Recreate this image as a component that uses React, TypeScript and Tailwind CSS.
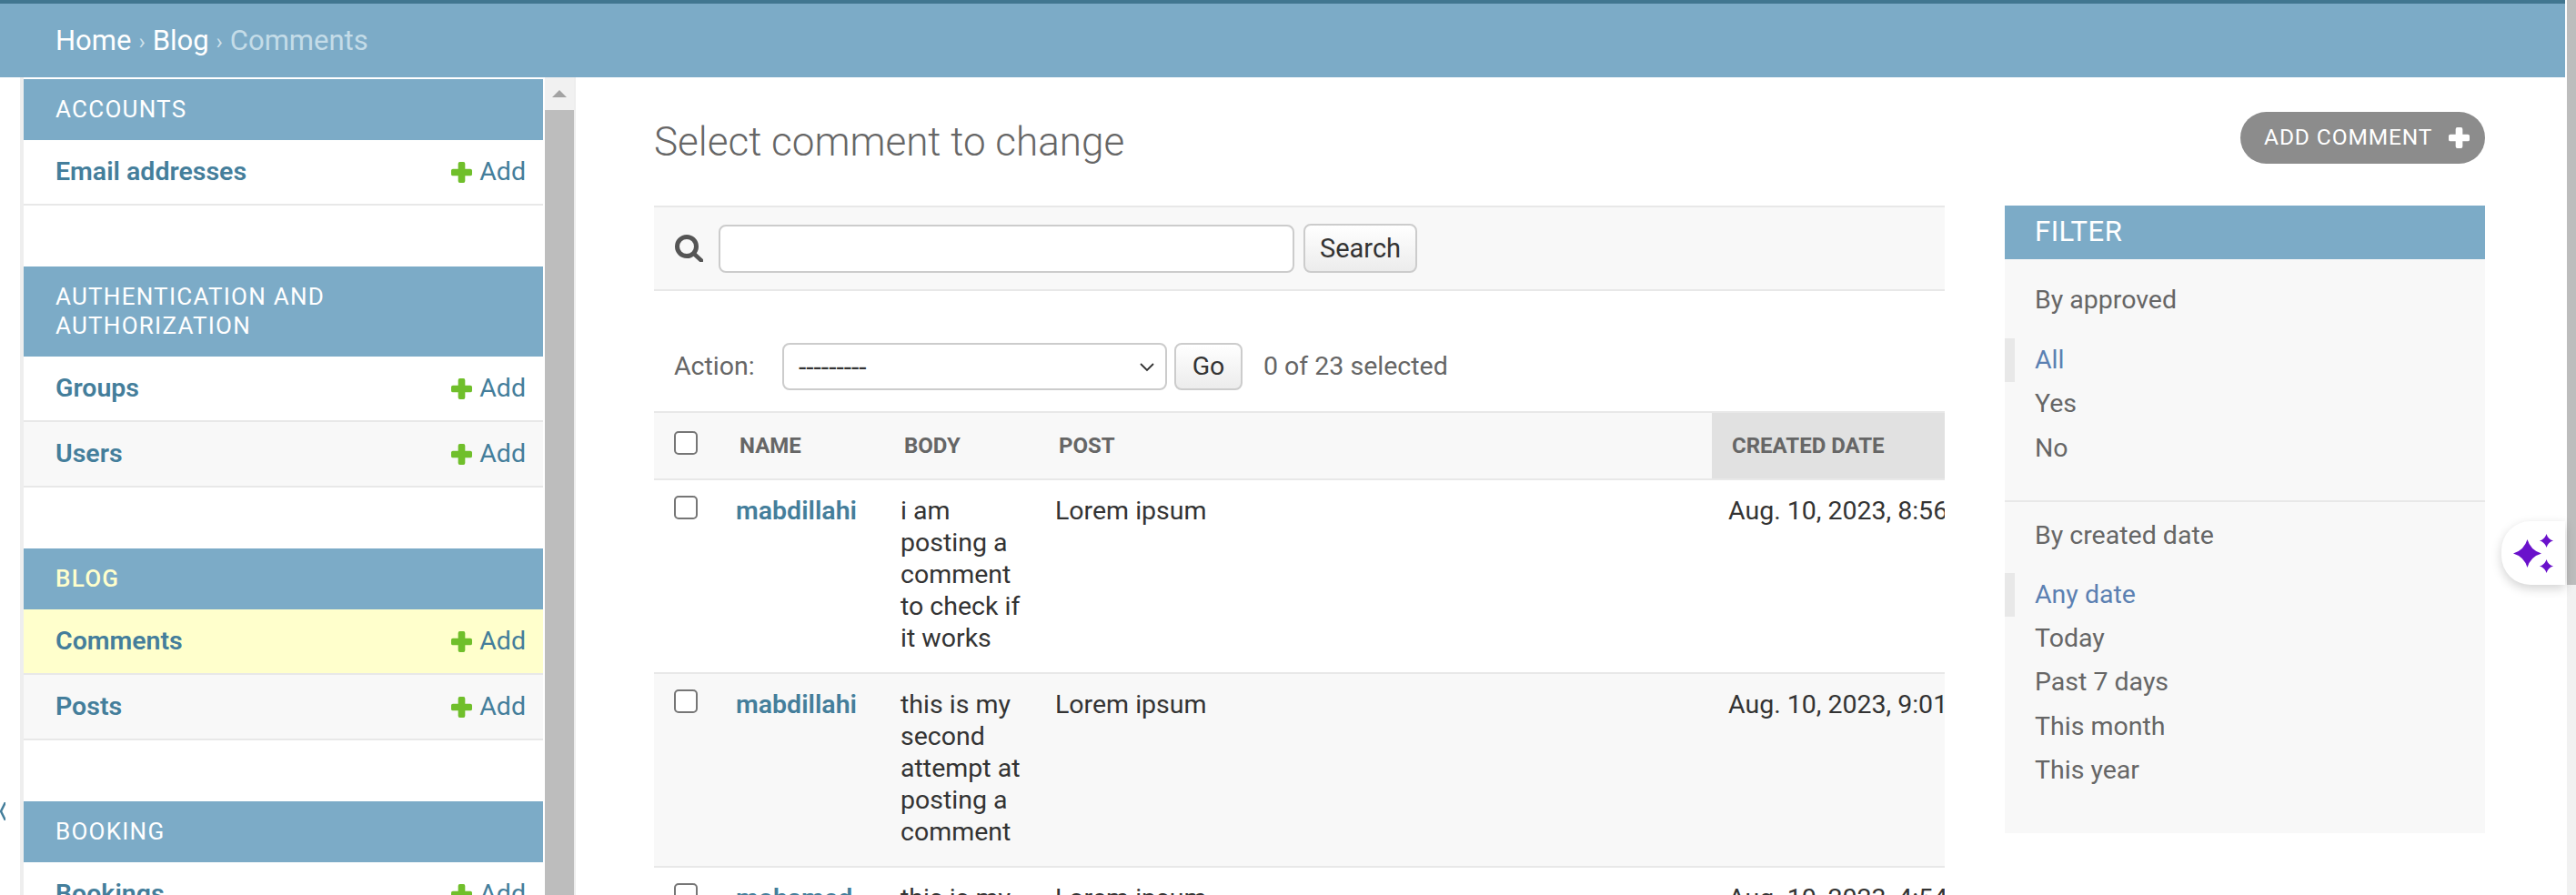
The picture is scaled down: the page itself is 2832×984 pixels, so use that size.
import { ReactNode } from "react";

const font = { fontFamily: "Roboto, 'Liberation Sans', sans-serif" };

const sections = [
  { title: "Accounts", rows: ["Email addresses"] },
  { title: "Authentication and Authorization", rows: ["Groups", "Users"] },
  { title: "Blog", rows: ["Comments", "Posts"], current: true },
  { title: "Booking", rows: ["Bookings"] },
];

const comments = [
  { name: "mabdillahi", body: "i am posting a comment to check if it works", post: "Lorem ipsum", date: "Aug. 10, 2023, 8:56 a.m." },
  { name: "mabdillahi", body: "this is my second attempt at posting a comment", post: "Lorem ipsum", date: "Aug. 10, 2023, 9:01 a.m." },
  { name: "mohamed", body: "this is my third comment", post: "Lorem ipsum", date: "Aug. 10, 2023, 4:54 p.m." },
];

const filters = [
  { title: "By approved", items: ["All", "Yes", "No"] },
  { title: "By created date", items: ["Any date", "Today", "Past 7 days", "This month", "This year"] },
];

function Plus({ className }: { className: string }) {
  return (
    <svg viewBox="0 0 24 24" className={className} fill="currentColor">
      <path d="M8 2a2 2 0 0 1 2-2h4a2 2 0 0 1 2 2v6h6a2 2 0 0 1 2 2v4a2 2 0 0 1-2 2h-6v6a2 2 0 0 1-2 2h-4a2 2 0 0 1-2-2v-6H2a2 2 0 0 1-2-2v-4a2 2 0 0 1 2-2h6z" />
    </svg>
  );
}

function SearchIcon() {
  return (
    <svg viewBox="0 0 32 30" className="w-[32px] h-[30px] text-[#555]" fill="none" stroke="currentColor">
      <circle cx="14" cy="13" r="10.5" strokeWidth="5" />
      <path d="M22 21l8 7.500" strokeWidth="4.500" strokeLinecap="round" />
    </svg>
  );
}

function Sparkles() {
  return (
    <svg viewBox="0 0 44 43" className="w-[44px] h-[43px] text-[#6a11cb]" fill="currentColor">
      <path d="M15.500 6Q19 18 31 21.500 19 25 15.500 37 12 25 0 21.500 12 18 15.500 6z" />
      <path d="M36.500 0Q38.200 5.800 44 7.500 38.200 9.200 36.500 15 34.800 9.200 29 7.500 34.800 5.800 36.500 0z" />
      <path d="M36.500 28Q38.200 33.800 44 35.500 38.200 37.200 36.500 43 34.800 37.200 29 35.500 34.800 33.800 36.500 28z" />
    </svg>
  );
}

function SideRow({ label, striped, current }: { label: string; striped: boolean; current: boolean }) {
  const bg = current ? "bg-[#ffffcc]" : striped ? "bg-[#f8f8f8]" : "bg-white";
  return (
    <div className={`${bg} h-[72px] border-b-2 border-[#e8e8e8] flex items-center justify-between pl-[35px] pr-[19px] text-[28.500px]`}>
      <span className="font-semibold text-[#447e9b]">{label}</span>
      <span className="flex items-center gap-[8px] text-[#447e9b]">
        <Plus className="w-[23px] h-[23px] text-[#70bf2b]" />
        Add
      </span>
    </div>
  );
}

function Sidebar() {
  return (
    <aside className="w-[611px] shrink-0 h-full ml-[22px] border-l-4 border-[#eeeeee] flex overflow-hidden">
      <div className="w-[571px] shrink-0 pt-[2px] flex flex-col gap-[67px]">
        {sections.map((s) => (
          <div key={s.title}>
            <div className={`bg-[#7cabc7] px-[35px] pt-[16.500px] pb-[18.500px] text-[26px] leading-[32px] tracking-[1.250px] uppercase ${s.current ? "font-medium text-[#ffffcc]" : "text-white"}`}>
              {s.title}
            </div>
            {s.rows.map((r, i) => (
              <SideRow key={r} label={r} striped={i % 2 === 1} current={r === "Comments"} />
            ))}
          </div>
        ))}
      </div>
      <div className="w-[36px] shrink-0 ml-[2px] border-r-4 border-[#eeeeee] bg-[#f1f1f1] flex flex-col">
        <div className="h-[36px] shrink-0 flex items-center justify-center">
          <div className="w-0 h-0 border-x-[8px] border-x-transparent border-b-[8px] border-b-[#a3a3a3]" />
        </div>
        <div className="flex-1 bg-[#bdbdbd]" />
      </div>
    </aside>
  );
}

function Th({ children, active }: { children: ReactNode; active?: boolean }) {
  return (
    <th className={`text-left align-middle pl-[22px] pr-0 text-[24px] font-bold uppercase text-[#666] whitespace-nowrap ${active ? "bg-[#e1e1e1]" : ""}`}>
      {children}
    </th>
  );
}

function Checkbox() {
  return <div className="w-[26px] h-[26px] rounded-[5px] border-2 border-[#767676] bg-white" />;
}

function ChangeList() {
  return (
    <div className="w-[1419px] shrink-0 overflow-hidden">
      <div className="bg-[#f8f8f8] border-y-2 border-[#e8e8e8] h-[94px] flex items-center pl-[22px] gap-[17px]">
        <SearchIcon />
        <div className="w-[633px] h-[53px] rounded-[8px] border-2 border-[#cccccc] bg-white" />
        <button className="h-[54px] w-[125px] -ml-[7px] pt-[1px] rounded-[8px] border-2 border-[#cccccc] bg-gradient-to-b from-white to-[#ececec] text-[29px] text-[#333]">
          Search
        </button>
      </div>
      <div className="h-[132px] pt-[36px] pb-[2px] pl-[22px] flex items-center text-[28.500px] text-[#666]">
        <span className="w-[119px]">Action:</span>
        <div className="w-[423px] h-[52px] rounded-[8px] border-2 border-[#cccccc] bg-white flex items-center justify-between pl-[16px] pr-[10px] text-[30px] text-[#333]">
          ---------
          <svg viewBox="0 0 20 20" className="w-[20px] h-[20px]" fill="none" stroke="#333" strokeWidth="1.800">
            <path d="M3 7l7 7 7-7" />
          </svg>
        </div>
        <button className="w-[75px] h-[52px] ml-[8px] rounded-[8px] border-2 border-[#cccccc] bg-gradient-to-b from-white to-[#ececec] text-[#333]">
          Go
        </button>
        <span className="ml-[23px] whitespace-nowrap">0 of 23 selected</span>
      </div>
      <table className="border-collapse table-fixed w-[1419px] text-[28.500px] text-[#333]">
        <colgroup>
          <col className="w-[72px]" />
          <col className="w-[181px]" />
          <col className="w-[170px]" />
          <col className="w-[740px]" />
          <col className="w-[256px]" />
        </colgroup>
        <thead>
          <tr className="bg-[#f8f8f8] border-y-2 border-[#e8e8e8] h-[74px]">
            <th className="pl-[22px] pb-[6px] text-left align-middle">
              <Checkbox />
            </th>
            <Th>Name</Th>
            <Th>Body</Th>
            <Th>Post</Th>
            <Th active>Created date</Th>
          </tr>
        </thead>
        <tbody>
          {comments.map((c, i) => (
            <tr key={i} className={`${i % 2 === 1 ? "bg-[#f8f8f8]" : "bg-white"} border-b-2 border-[#e8e8e8]`}>
              <td className="pl-[22px] pt-[17px] align-top">
                <Checkbox />
              </td>
              <td className="pl-[18px] pt-[16px] pb-[20px] align-top leading-[35px] font-semibold text-[#447e9b] whitespace-nowrap">{c.name}</td>
              <td className="pl-[18px] pt-[16px] pb-[20px] align-top leading-[35px]">{c.body}</td>
              <td className="pl-[18px] pt-[16px] pb-[20px] align-top leading-[35px]">{c.post}</td>
              <td className="pl-[18px] pt-[16px] pb-[20px] align-top leading-[35px] whitespace-nowrap">{c.date}</td>
            </tr>
          ))}
        </tbody>
      </table>
    </div>
  );
}

function FilterPanel() {
  return (
    <div className="w-[528px] shrink-0 ml-[66px] self-start bg-[#f8f8f8] text-[28.500px]">
      <div className="h-[59px] bg-[#7cabc7] pl-[33px] flex items-center text-[31px] tracking-[0.500px] text-white">FILTER</div>
      {filters.map((f, i) => (
        <div key={f.title} className={i === 0 ? "pb-[33px] border-b-2 border-[#e8e8e8]" : "pb-[45px]"}>
          <div className={`pl-[33px] text-[#666] leading-[48px] ${i === 0 ? "pt-[21px] pb-[18px]" : "pt-[13px] pb-[17px]"}`}>{f.title}</div>
          {f.items.map((item, k) => (
            <div
              key={item}
              className={`h-[48.250px] leading-[48px] pl-[22px] border-l-[11px] ${k === 0 ? "border-[#e8e8e8] text-[#5b80b2]" : "border-transparent text-[#666]"}`}
            >
              {item}
            </div>
          ))}
        </div>
      ))}
    </div>
  );
}

export default function App() {
  return (
    <div className="relative w-[2832px] h-[984px] overflow-hidden bg-white flex" style={font}>
      <div className="flex-1 min-w-0 h-full flex flex-col">
        <div className="h-[85px] shrink-0 bg-[#7cabc7] border-t-4 border-[#417690] pt-[2px] pl-[61px] flex items-center text-[31px] text-white">
          Home<span className="mx-[8px] text-[#cfe2ec] text-[24px]">›</span>Blog<span className="mx-[8px] text-[#cfe2ec] text-[24px]">›</span>
          <span className="text-[#c4dce8]">Comments</span>
        </div>
        <div className="flex-1 min-h-0 flex">
          <Sidebar />
          <main className="flex-1 min-w-0 pl-[86px] pt-[38px]">
            <div className="flex items-start justify-between pr-[88px] h-[103px]">
              <h1 className="mt-[5px] text-[44px] leading-[57px] font-light text-[#666]">Select comment to change</h1>
              <div className="w-[269px] h-[57px] rounded-full bg-[#8c8c8c] flex items-center pl-[26px] gap-[18px] text-[24.500px] tracking-[0.900px] text-white whitespace-nowrap">
                ADD COMMENT
                <Plus className="w-[23px] h-[23px]" />
              </div>
            </div>
            <div className="flex">
              <ChangeList />
              <FilterPanel />
            </div>
          </main>
        </div>
      </div>
      <div className="w-[12px] shrink-0 h-full pl-[2px] bg-white flex flex-col">
        <div className="h-[643px] bg-[#bdbdbd]" />
        <div className="flex-1 bg-[#f1f1f1]" />
      </div>
      <div className="absolute left-0 top-[882px] w-[6px] h-[20px] overflow-hidden text-[#447e9b]">
        <svg viewBox="0 0 6 20" className="w-[6px] h-[20px]" fill="none" stroke="currentColor" strokeWidth="2.500">
          <path d="M6 0L1 10l5 10" />
        </svg>
      </div>
      <div className="absolute left-[2750px] top-[573px] w-[70px] h-[70px] rounded-l-[32px] bg-white shadow-[0_4px_12px_rgba(0,0,0,0.18)] flex items-center pl-[13px]">
        <Sparkles />
      </div>
    </div>
  );
}
